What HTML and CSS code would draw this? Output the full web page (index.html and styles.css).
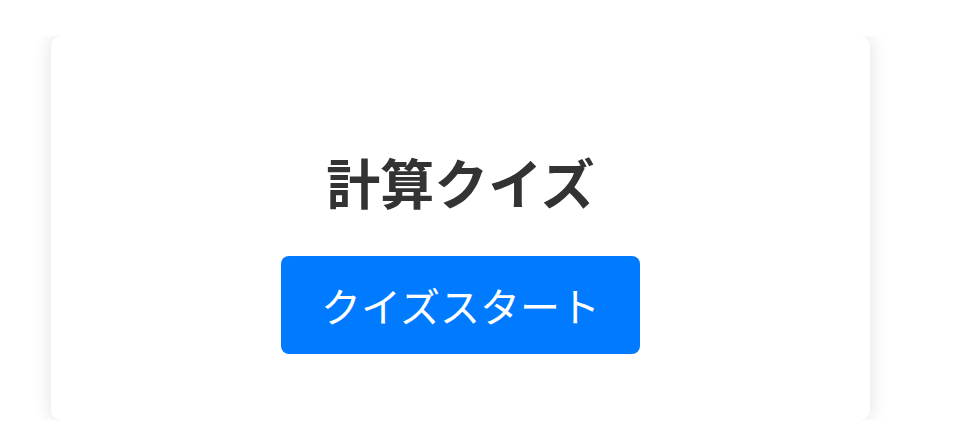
FILE: index.html
```html
<!DOCTYPE html>
<html lang="ja">
<head>
    <meta charset="UTF-8">
    <meta name="viewport" content="width=device-width, initial-scale=1.0">
    <title>計算クイズ</title>
    <link rel="stylesheet" href="styles.css">
</head>
<body>
    <div class="wrapper">
        <div class="quiz-card">
            <h1>計算クイズ</h1>
            <button class="start-btn">クイズスタート</button>
        </div>
    </div>
</body>
</html>
```

FILE: styles.css
```css
body {
    margin: 0;
    font-family: "Noto Sans CJK JP", "Noto Sans", sans-serif;
    background: #fff;
    color: #333;
}

.wrapper {
    margin-top: 36px;
    padding: 0 86px 0 51px;
    overflow: hidden;
}

.quiz-card {
    background: #fff;
    border-radius: 10px;
    box-shadow: 0 0 20px rgba(0, 0, 0, 0.12);
    padding: 106px 20px 66px;
    text-align: center;
}

h1 {
    font-size: 54px;
    font-weight: bold;
    margin: 0 0 35px;
    color: #333;
}

.start-btn {
    font-family: inherit;
    font-size: 40px;
    color: #fff;
    background: #007bff;
    border: none;
    border-radius: 8px;
    padding: 20px 40px;
    cursor: pointer;
}
```
